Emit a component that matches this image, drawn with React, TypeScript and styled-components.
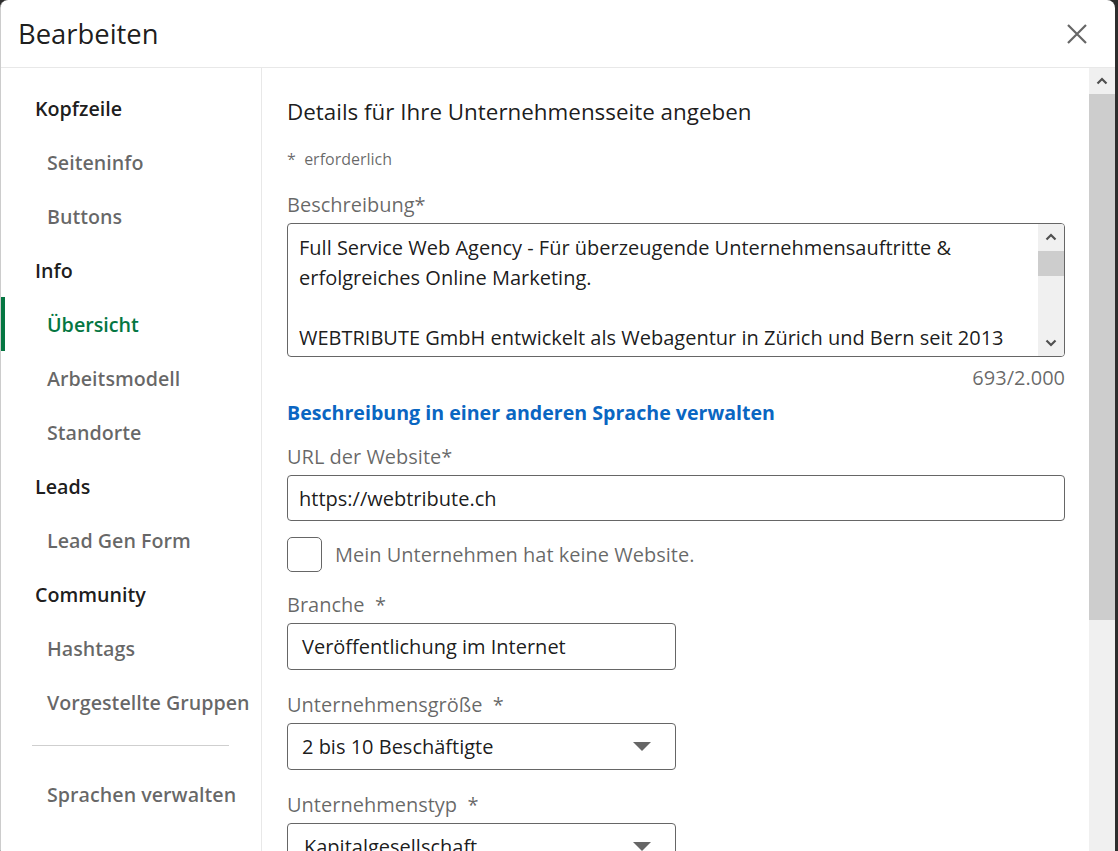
import React from 'react';
import styled, { createGlobalStyle } from 'styled-components';

const GlobalStyle = createGlobalStyle`
  html, body {
    margin: 0;
    padding: 0;
    height: 100%;
    background: #2d2d2d;
    overflow: hidden;
  }
  body {
    font-family: "Open Sans", "Noto Sans", sans-serif;
    color: rgba(0, 0, 0, 0.9);
  }
`;

const Modal = styled.div`
  width: 1115px;
  height: 851px;
  background: #fff;
  border-radius: 8px 8px 0 0;
  border-left: 1px dotted #9a9a9a;
  box-sizing: border-box;
  overflow: hidden;
  display: flex;
  flex-direction: column;
`;

const Header = styled.header`
  height: 67px;
  flex: none;
  display: flex;
  align-items: center;
  justify-content: space-between;
  padding: 0 26px 0 17px;
  border-bottom: 1px solid #e8e8e8;
`;

const Title = styled.h2`
  margin: 0;
  font-size: 27.4px;
  font-weight: 400;
  color: rgba(0, 0, 0, 0.9);
`;

const CloseButton = styled.button`
  width: 24px;
  height: 24px;
  padding: 0;
  border: none;
  background: transparent;
  display: flex;
  align-items: center;
  justify-content: center;
  cursor: pointer;
`;

const Body = styled.div`
  flex: 1;
  display: flex;
  min-height: 0;
`;

const Sidebar = styled.nav`
  width: 260px;
  flex: none;
  border-right: 1px solid #e8e8e8;
  padding-top: 13px;
`;

const NavItem = styled.div<{ $sub?: boolean; $active?: boolean }>`
  height: 54px;
  display: flex;
  align-items: center;
  padding-left: ${({ $sub }) => ($sub ? '46px' : '34px')};
  font-size: 19.7px;
  font-weight: 600;
  color: ${({ $sub, $active }) => ($active ? '#057642' : $sub ? 'rgba(0, 0, 0, 0.6)' : 'rgba(0, 0, 0, 0.9)')};
  box-shadow: ${({ $active }) => ($active ? 'inset 4px 0 0 #057642' : 'none')};
  cursor: pointer;
`;

const NavDivider = styled.hr`
  margin: 16px 0 21px 31px;
  width: 197px;
  border: none;
  border-top: 1px solid #cfcfcf;
`;

const Main = styled.main`
  flex: 1;
  padding: 0 24px 0 25px;
  overflow: hidden;
`;

const Heading = styled.h3`
  margin: 30px 0 0;
  font-size: 22.4px;
  line-height: 28px;
  font-weight: 400;
  color: rgba(0, 0, 0, 0.9);
`;

const Required = styled.p`
  margin: 22px 0 0;
  font-size: 16px;
  line-height: 22px;
  color: rgba(0, 0, 0, 0.6);
`;

const Field = styled.div<{ $top: number; $width?: number }>`
  margin-top: ${({ $top }) => $top}px;
  width: ${({ $width }) => ($width ? `${$width}px` : 'auto')};
`;

const Label = styled.label`
  display: block;
  font-size: 20px;
  line-height: 26px;
  color: rgba(0, 0, 0, 0.6);
  margin-bottom: 5px;
`;

const TextBox = styled.div`
  height: 134px;
  box-sizing: border-box;
  border: 1px solid #666;
  border-radius: 4px;
  display: flex;
  overflow: hidden;
`;

const TextContent = styled.div`
  flex: 1;
  padding: 9px 11px;
  font-size: 20px;
  line-height: 30px;
  color: rgba(0, 0, 0, 0.9);
  white-space: nowrap;
  overflow: hidden;
`;

const ScrollTrack = styled.div<{ $thumbTop: number; $thumbHeight: number }>`
  width: 26px;
  flex: none;
  background: #f0f0f0;
  position: relative;
  display: flex;
  flex-direction: column;
  justify-content: space-between;
  align-items: center;

  &::before {
    content: '';
    position: absolute;
    left: 0;
    right: 0;
    top: ${({ $thumbTop }) => $thumbTop}px;
    height: ${({ $thumbHeight }) => $thumbHeight}px;
    background: #cdcdcd;
  }
`;

const ArrowCell = styled.div`
  height: 26px;
  width: 26px;
  display: flex;
  align-items: center;
  justify-content: center;
`;

const Counter = styled.div`
  margin-top: 8px;
  text-align: right;
  font-size: 20px;
  line-height: 26px;
  color: rgba(0, 0, 0, 0.6);
`;

const Link = styled.a`
  display: block;
  margin-top: 9px;
  font-size: 19.6px;
  line-height: 26px;
  font-weight: 700;
  color: #0a66c2;
  text-decoration: none;
`;

const Input = styled.div<{ $height: number; $padLeft: number }>`
  height: ${({ $height }) => $height}px;
  box-sizing: border-box;
  border: 1px solid #666;
  border-radius: 4px;
  display: flex;
  align-items: center;
  justify-content: space-between;
  padding: 0 24px 0 ${({ $padLeft }) => $padLeft}px;
  font-size: 20px;
  color: rgba(0, 0, 0, 0.9);
`;

const CheckRow = styled.div`
  margin-top: 16px;
  display: flex;
  align-items: center;
  gap: 13px;
`;

const CheckBox = styled.span`
  width: 35px;
  height: 35px;
  box-sizing: border-box;
  border: 1px solid #666;
  border-radius: 5px;
`;

const CheckText = styled.span`
  font-size: 20px;
  color: rgba(0, 0, 0, 0.6);
`;

const PageScroll = styled(ScrollTrack)`
  justify-content: flex-start;
`;

const Chevron = ({ up }: { up?: boolean }) => (
  <svg width="12" height="8" viewBox="0 0 12 8">
    <path
      d={up ? 'M1.5 6.5 L6 2 L10.5 6.5' : 'M1.5 1.5 L6 6 L10.5 1.5'}
      fill="none"
      stroke="#505050"
      strokeWidth="2.2"
    />
  </svg>
);

const Caret = () => (
  <svg width="18" height="9" viewBox="0 0 18 9">
    <polygon points="0,0 18,0 9,9" fill="#666" />
  </svg>
);

const nav = [
  { label: 'Kopfzeile' },
  { label: 'Seiteninfo', sub: true },
  { label: 'Buttons', sub: true },
  { label: 'Info' },
  { label: 'Übersicht', sub: true, active: true },
  { label: 'Arbeitsmodell', sub: true },
  { label: 'Standorte', sub: true },
  { label: 'Leads' },
  { label: 'Lead Gen Form', sub: true },
  { label: 'Community' },
  { label: 'Hashtags', sub: true },
  { label: 'Vorgestellte Gruppen', sub: true },
];

export default function App() {
  return (
    <>
      <GlobalStyle />
      <Modal>
        <Header>
          <Title>Bearbeiten</Title>
          <CloseButton aria-label="Schliessen">
            <svg width="20" height="20" viewBox="0 0 20 20">
              <path d="M1 1 L19 19 M19 1 L1 19" stroke="#666" strokeWidth="2.2" />
            </svg>
          </CloseButton>
        </Header>
        <Body>
          <Sidebar>
            {nav.map((item) => (
              <NavItem key={item.label} $sub={item.sub} $active={item.active}>
                {item.label}
              </NavItem>
            ))}
            <NavDivider />
            <NavItem $sub>Sprachen verwalten</NavItem>
          </Sidebar>
          <Main>
            <Heading>Details für Ihre Unternehmensseite angeben</Heading>
            <Required>*&nbsp; erforderlich</Required>
            <Field $top={22}>
              <Label>Beschreibung*</Label>
              <TextBox>
                <TextContent>
                  Full Service Web Agency - Für überzeugende Unternehmensauftritte &amp;
                  <br />
                  erfolgreiches Online Marketing.
                  <br />
                  <br />
                  WEBTRIBUTE GmbH entwickelt als Webagentur in Zürich und Bern seit 2013
                </TextContent>
                <ScrollTrack $thumbTop={27} $thumbHeight={25}>
                  <ArrowCell>
                    <Chevron up />
                  </ArrowCell>
                  <ArrowCell>
                    <Chevron />
                  </ArrowCell>
                </ScrollTrack>
              </TextBox>
            </Field>
            <Counter>693/2.000</Counter>
            <Link href="#">Beschreibung in einer anderen Sprache verwalten</Link>
            <Field $top={18}>
              <Label>URL der Website*</Label>
              <Input $height={46} $padLeft={11}>https://webtribute.ch</Input>
            </Field>
            <CheckRow>
              <CheckBox />
              <CheckText>Mein Unternehmen hat keine Website.</CheckText>
            </CheckRow>
            <Field $top={20} $width={389}>
              <Label>Branche&nbsp; *</Label>
              <Input $height={47} $padLeft={14}>Veröffentlichung im Internet</Input>
            </Field>
            <Field $top={22} $width={389}>
              <Label>Unternehmensgröße&nbsp; *</Label>
              <Input $height={47} $padLeft={14}>
                2 bis 10 Beschäftigte
                <Caret />
              </Input>
            </Field>
            <Field $top={22} $width={389}>
              <Label>Unternehmenstyp&nbsp; *</Label>
              <Input $height={47} $padLeft={16}>
                Kapitalgesellschaft
                <Caret />
              </Input>
            </Field>
          </Main>
          <PageScroll $thumbTop={26} $thumbHeight={526}>
            <ArrowCell>
              <Chevron up />
            </ArrowCell>
          </PageScroll>
        </Body>
      </Modal>
    </>
  );
}
